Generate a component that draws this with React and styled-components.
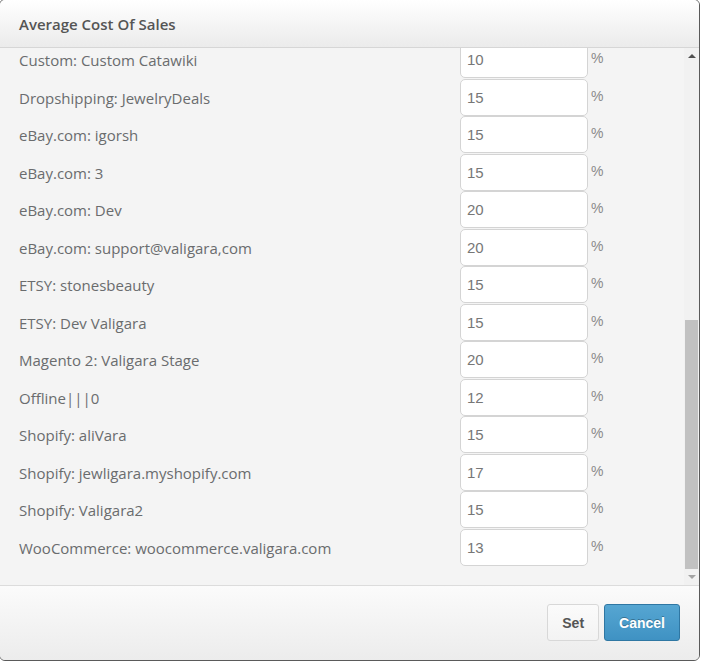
import React, { useLayoutEffect, useRef, useState } from "react";
import styled, { createGlobalStyle } from "styled-components";

const GlobalStyle = createGlobalStyle`
  html, body {
    margin: 0;
    padding: 0;
    background: #ffffff;
    overflow: hidden;
  }
  * {
    box-sizing: border-box;
  }
`;

const SModal = styled.div`
  margin: -1px 0 0 -1px;
  width: 701px;
  height: 662px;
  display: flex;
  flex-direction: column;
  border: 1px solid #5a5a5a;
  border-radius: 6px;
  overflow: hidden;
  background: #f4f4f4;
  font-family: "Open Sans", "Liberation Sans", sans-serif;
`;

const SHeader = styled.div`
  flex: 0 0 48px;
  display: flex;
  align-items: center;
  padding: 0 19px;
  background: linear-gradient(to bottom, #ffffff 0%, #ebebeb 100%);
  border-bottom: 1px solid #d6d6d6;
`;

const STitle = styled.h4`
  margin: 0;
  font-size: 15px;
  font-weight: 600;
  color: #555555;
`;

const SBodyArea = styled.div`
  flex: 1 1 auto;
  min-height: 0;
  display: flex;
`;

const SBody = styled.div`
  flex: 1 1 auto;
  overflow: hidden;
  background: #f4f4f4;
  padding: 20px 0 20px 19px;
`;

const SScrollbar = styled.div`
  flex: 0 0 15px;
  display: flex;
  flex-direction: column;
  background: #f1f1f1;
`;

const SArrow = styled.div`
  flex: 0 0 16px;
  display: flex;
  align-items: center;
  justify-content: center;

  &::before {
    content: "";
    width: 0;
    height: 0;
    border-left: 4px solid transparent;
    border-right: 4px solid transparent;
    ${({ down, disabled }) =>
      down
        ? `border-top: 4px solid ${disabled ? "#a3a3a3" : "#505050"};`
        : `border-bottom: 4px solid ${disabled ? "#a3a3a3" : "#505050"};`}
  }
`;

const STrack = styled.div`
  flex: 1 1 auto;
  display: flex;
  flex-direction: column;
  padding: 0 1px;
`;

const SThumb = styled.div`
  width: 100%;
  background: #c1c1c1;
`;

const SRow = styled.div`
  display: grid;
  grid-template-columns: 441px 128px 1fr;
  align-items: center;
  height: 36px;
  margin-bottom: 1.5px;

  &:last-child {
    margin-bottom: 0;
  }
`;

const SLabel = styled.span`
  font-size: 15px;
  color: #6a6c6e;
  white-space: nowrap;
  margin-top: 1px;
`;

const SInput = styled.input`
  width: 128px;
  height: 37px;
  padding: 0 6px;
  border: 1px solid #d4d4d4;
  border-radius: 5px;
  background: #ffffff;
  font-family: "Liberation Sans", Arial, sans-serif;
  font-size: 15px;
  color: #777777;
  outline: none;
`;

const SPercent = styled.span`
  padding-left: 3px;
  margin-top: -3px;
  font-family: "Liberation Sans", Arial, sans-serif;
  font-size: 14px;
  color: #8a8a8a;
`;

const SFooter = styled.div`
  flex: 0 0 75px;
  display: flex;
  justify-content: flex-end;
  align-items: center;
  gap: 5px;
  padding: 0 19px 1px 0;
  background: linear-gradient(to bottom, #fbfbfb 0%, #ececec 100%);
  border-top: 1px solid #dcdcdc;
`;

const SButton = styled.button`
  height: 37px;
  padding: 0 14px;
  border-radius: 3px;
  font-family: "Liberation Sans", Arial, sans-serif;
  font-size: 14px;
  font-weight: bold;
  cursor: pointer;
  color: ${({ primary }) => (primary ? "#ffffff" : "#555555")};
  border: 1px solid ${({ primary }) => (primary ? "#2f77a3" : "#d8d8d8")};
  background: ${({ primary }) =>
    primary
      ? "linear-gradient(to bottom, #56a6d2 0%, #3f92c3 100%)"
      : "linear-gradient(to bottom, #fbfbfb 0%, #f3f3f3 100%)"};
  text-shadow: ${({ primary }) => (primary ? "0 -1px 0 rgba(0,0,0,0.3)" : "none")};
`;

const channels = [
  ["Amazon.com: Valigara", "15"],
  ["Amazon.co.uk: Valigara UK", "15"],
  ["Amazon.de: Valigara DE", "15"],
  ["Artfire: stonesbeauty", "12"],
  ["Bonanza: valigara", "10"],
  ["Bonanza: jewelrydeals", "10"],
  ["Catawiki: Valigara", "15"],
  ["Custom: Alibaba", "10"],
  ["Custom: Amazon FBA", "15"],
  ["Custom: B2B", "10"],
  ["Custom: Bidz", "12"],
  ["Custom: Wholesale", "10"],
  ["Custom: Retail", "10"],
  ["Custom: Trade Show", "10"],
  ["Custom: Custom Catawiki", "10"],
  ["Dropshipping: JewelryDeals", "15"],
  ["eBay.com: igorsh", "15"],
  ["eBay.com: 3", "15"],
  ["eBay.com: Dev", "20"],
  ["eBay.com: support@valigara,com", "20"],
  ["ETSY: stonesbeauty", "15"],
  ["ETSY: Dev Valigara", "15"],
  ["Magento 2: Valigara Stage", "20"],
  ["Offline|||0", "12"],
  ["Shopify: aliVara", "15"],
  ["Shopify: jewligara.myshopify.com", "17"],
  ["Shopify: Valigara2", "15"],
  ["WooCommerce: woocommerce.valigara.com", "13"],
];

const App = () => {
  const [values, setValues] = useState(channels.map((c) => c[1]));
  const [scroll, setScroll] = useState({ top: 0, height: 0, atEnd: false });
  const bodyRef = useRef(null);
  const trackRef = useRef(null);

  // body scrolled to the end, as in the shot; thumb drawn from that
  useLayoutEffect(() => {
    const body = bodyRef.current;
    const track = trackRef.current;
    if (!body || !track) return;
    body.scrollTop = body.scrollHeight;
    const max = body.scrollHeight - body.clientHeight;
    const ratio = body.clientHeight / body.scrollHeight;
    const trackH = track.clientHeight;
    const thumbH = trackH * ratio;
    const top = max > 0 ? (body.scrollTop / max) * (trackH - thumbH) : 0;
    setScroll({ top, height: thumbH, atEnd: body.scrollTop >= max - 1 });
  }, []);

  const change = (i, v) =>
    setValues((prev) => prev.map((old, j) => (j === i ? v : old)));

  return (
    <>
      <GlobalStyle />
      <SModal>
        <SHeader>
          <STitle>Average Cost Of Sales</STitle>
        </SHeader>
        <SBodyArea>
          <SBody ref={bodyRef}>
            {channels.map(([name], i) => (
              <SRow key={name}>
                <SLabel>{name}</SLabel>
                <SInput value={values[i]} onChange={(e) => change(i, e.target.value)} />
                <SPercent>%</SPercent>
              </SRow>
            ))}
          </SBody>
          <SScrollbar>
            <SArrow />
            <STrack ref={trackRef}>
              <SThumb style={{ marginTop: scroll.top, height: scroll.height }} />
            </STrack>
            <SArrow down disabled={scroll.atEnd} />
          </SScrollbar>
        </SBodyArea>
        <SFooter>
          <SButton>Set</SButton>
          <SButton primary>Cancel</SButton>
        </SFooter>
      </SModal>
    </>
  );
};

export default App;
